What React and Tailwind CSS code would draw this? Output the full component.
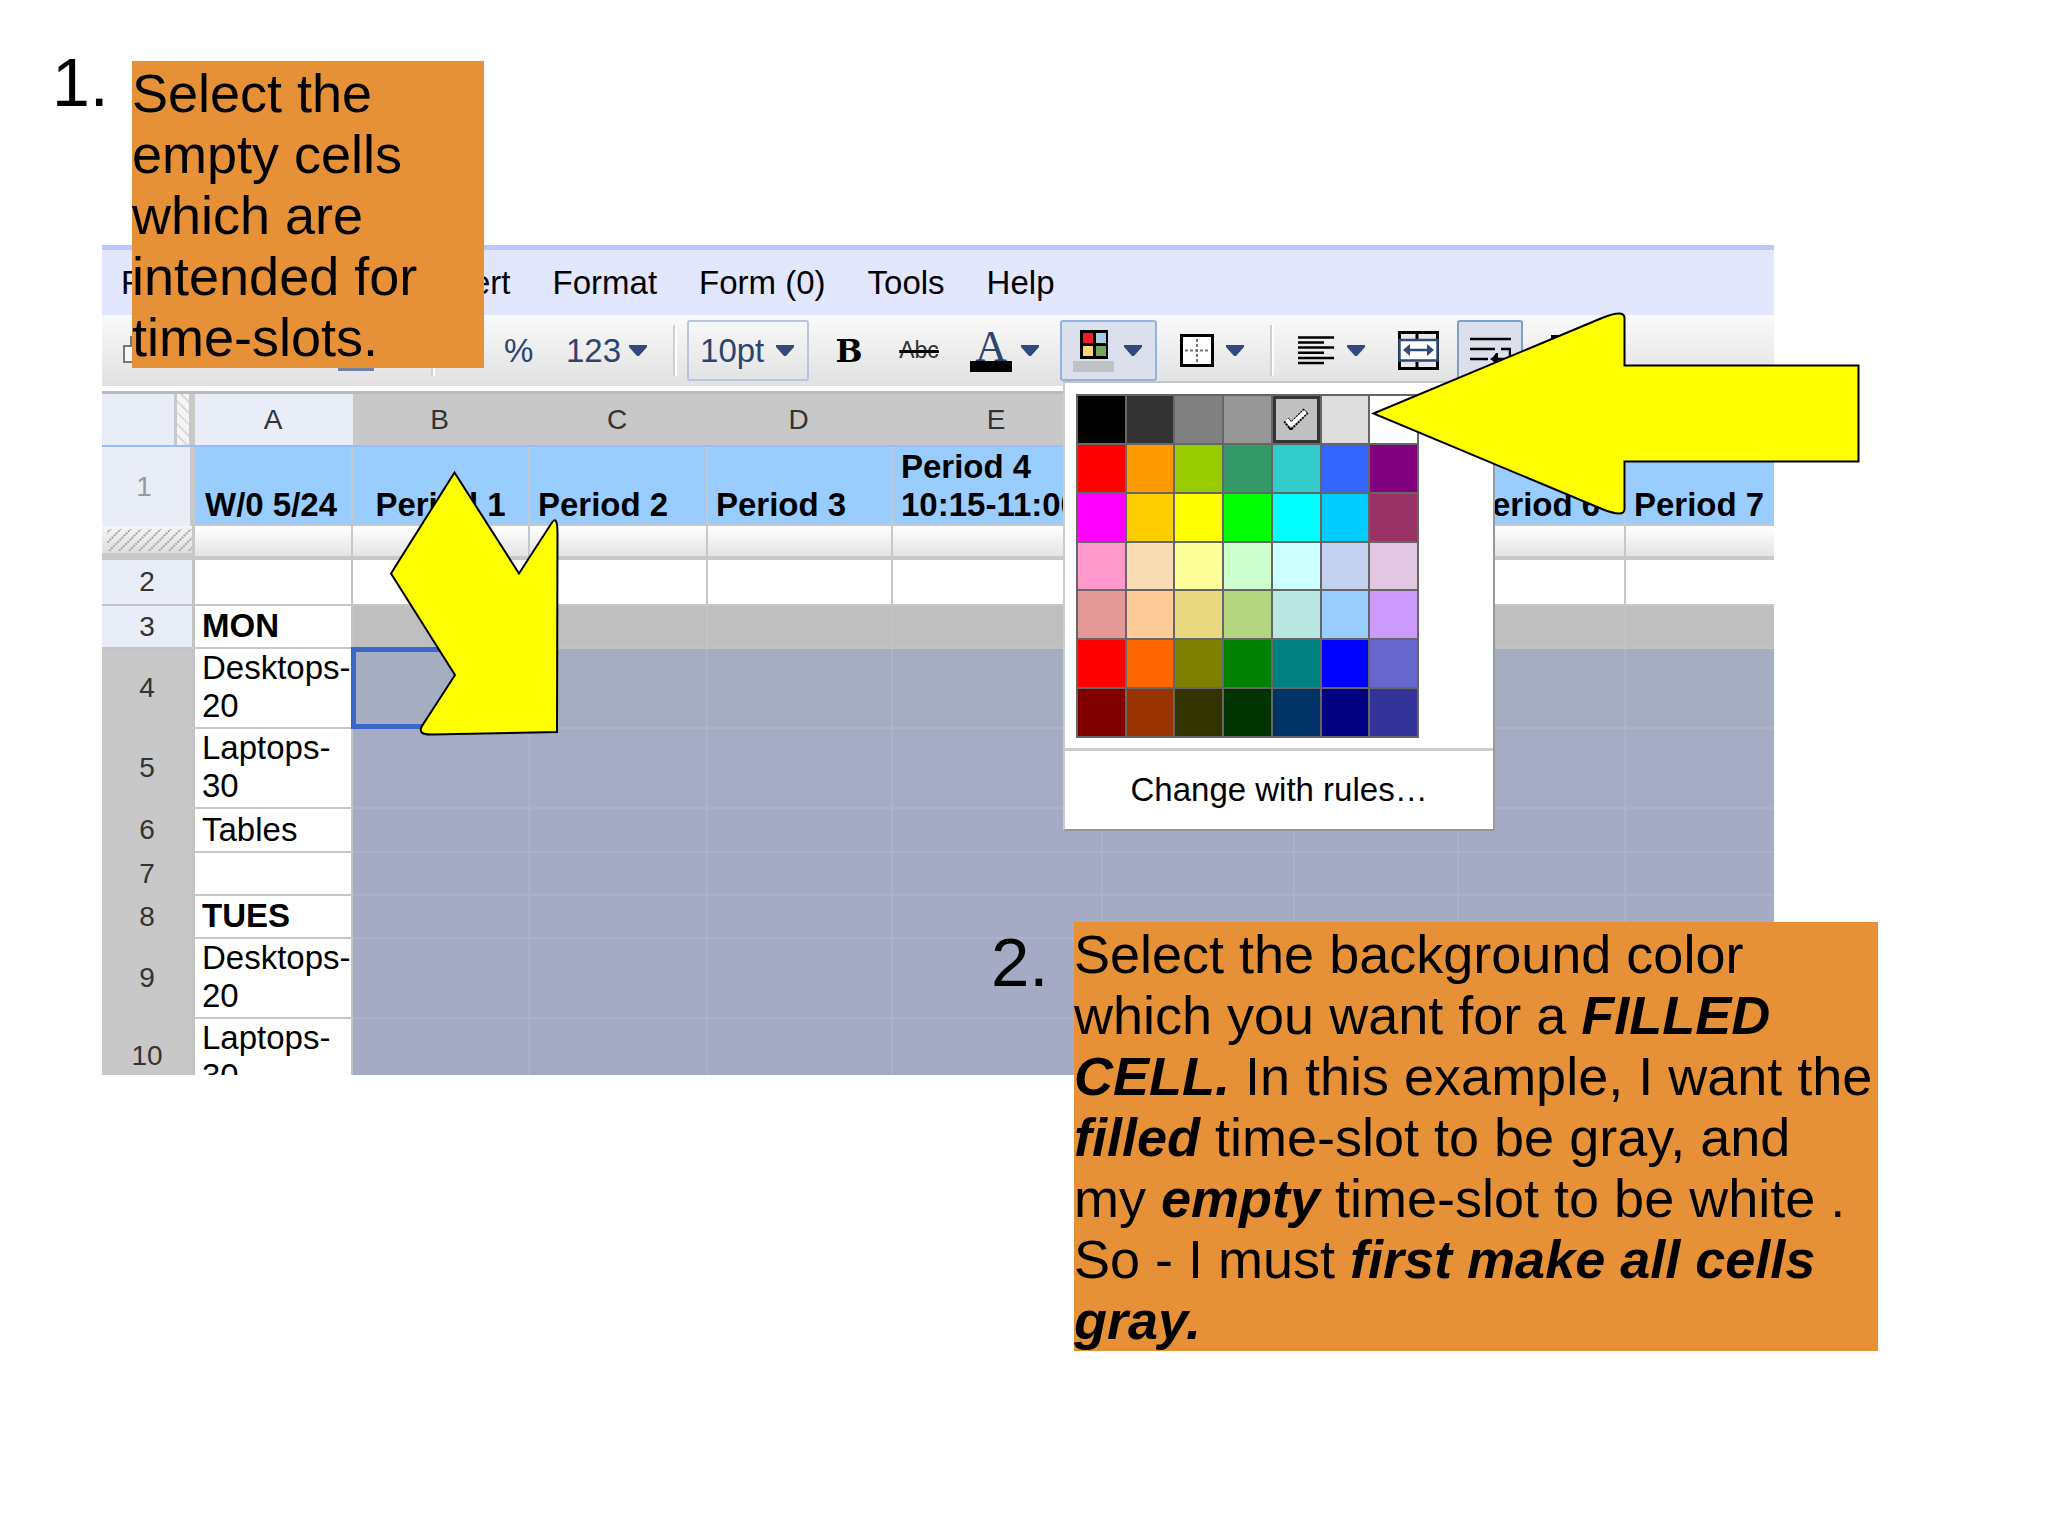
import { useState } from 'react';

const menus = ['File', 'Edit', 'View', 'Insert', 'Format', 'Form (0)', 'Tools', 'Help'];

const palette = [
    '#000000', '#333333', '#808080', '#969696', '#c0c0c0', '#dddddd', '#ffffff',
    '#ff0000', '#ff9900', '#99cc00', '#339966', '#33cccc', '#3366ff', '#800080',
    '#ff00ff', '#ffcc00', '#ffff00', '#00ff00', '#00ffff', '#00ccff', '#993366',
    '#ff99cc', '#f9dcb4', '#ffff99', '#ccffcc', '#ccffff', '#c2d1f0', '#e1c7e1',
    '#e49898', '#ffcc99', '#ead880', '#b3d580', '#bbe7e2', '#99ccff', '#cc99ff',
    '#ff0000', '#ff6600', '#808000', '#008000', '#008080', '#0000ff', '#6666cc',
    '#800000', '#993300', '#333300', '#003300', '#003366', '#000080', '#333399',
];

const letters = ['B', 'C', 'D', 'E', 'F', 'G', 'H', 'I'];

const periods = [
    ['B', 'Period 1', 'text-center'],
    ['C', 'Period 2', 'pl-[8px]'],
    ['D', 'Period 3', 'pl-[8px]'],
    ['E', 'Period 4', 'pl-[8px]', '10:15-11:00'],
    ['F', '', 'pl-[8px]'],
    ['G', '', 'pl-[8px]'],
    ['H', 'Period 6', 'pl-[11px]'],
    ['I', 'Period 7', 'pl-[8px]'],
];

const rows = [
    { n: 2, height: 'h-[46px]', lines: [], fill: 'bg-white border-[#c8c8c8]' },
    { n: 3, height: 'h-[43px]', lines: ['MON'], bold: true, fill: 'bg-[#c0bfc0] border-[#c3c3c5]' },
    { n: 4, height: 'h-[80px]', lines: ['Desktops-', '20'], fill: 'bg-[#a5adc0] border-[#abb4cb]', selected: true },
    { n: 5, height: 'h-[80px]', lines: ['Laptops-', '30'], fill: 'bg-[#a6acc3] border-[#abb3cc]', selected: true },
    { n: 6, height: 'h-[44px]', lines: ['Tables'], fill: 'bg-[#a6abc5] border-[#abb3cc]', selected: true },
    { n: 7, height: 'h-[43px]', lines: [], fill: 'bg-[#a6abc5] border-[#abb3cc]', selected: true },
    { n: 8, height: 'h-[43px]', lines: ['TUES'], bold: true, fill: 'bg-[#a6abc5] border-[#abb3cc]', selected: true },
    { n: 9, height: 'h-[80px]', lines: ['Desktops-', '20'], fill: 'bg-[#a6abc5] border-[#abb3cc]', selected: true },
    { n: 10, height: 'h-[56px]', lines: ['Laptops-', '30'], fill: 'bg-[#a6abc5] border-[#abb3cc]', selected: true, last: true },
];

const Caret = () => (
    <svg width="18" height="11" viewBox="0 0 18 11" className="shrink-0" fill="#2f4a7c">
        <path d="M0 0h18v2l-8 9H8L0 2z" />
    </svg>
);

const Divider = ({ className }) => (
    <div className={`h-[51px] w-1 shrink-0 border-l-2 border-r-2 border-l-[#cfcfd2] border-r-white ${className}`} />
);

const FillIcon = () => (
    <svg width="41" height="43" viewBox="0 0 41 43">
        <path d="M7 1h28v29H7z" fill="#000" />
        <path d="M10 4h10v10H10z" fill="#ee1c25" />
        <path d="M23 4h10v10H23z" fill="#a8cbe8" />
        <path d="M10 17h10v10H10z" fill="#ffd670" />
        <path d="M23 17h10v10H23z" fill="#72a858" />
        <path d="M0 32h41v11H0z" fill="#bfc3c6" />
    </svg>
);

const BordersIcon = () => (
    <svg width="34" height="33" viewBox="0 0 34 33" fill="none">
        <path d="M1.5 1.5h31v30h-31z" fill="#fff" stroke="#000" strokeWidth="3" />
        <path d="M17 5v24M5 16.500h24" stroke="#777" strokeWidth="2" strokeDasharray="3 2" />
    </svg>
);

const AlignIcon = () => (
    <svg width="36" height="29" viewBox="0 0 36 29" stroke="#000" strokeWidth="2.500">
        <path d="M0 1.500h36M0 6.500h26M0 11.500h36M0 16.700h26M0 21.900h36M0 27h26" />
    </svg>
);

const MergeIcon = () => (
    <svg width="41" height="39" viewBox="0 0 41 39" fill="none">
        <path d="M1.500 1.500h38v36h-38z" fill="#e9e9eb" stroke="#000" strokeWidth="3" />
        <path d="M19 1v7M19 31v7" stroke="#000" strokeWidth="3" />
        <path d="M1.500 9h38v20.500h-38z" fill="#fff" stroke="#2f4a7c" strokeWidth="2.500" />
        <path d="M9 19h23" stroke="#2f4a7c" strokeWidth="2.500" />
        <path d="M5 19l7-6v12zM36 19l-7-6v12z" fill="#2f4a7c" />
    </svg>
);

const WrapIcon = () => (
    <svg width="41" height="29" viewBox="0 0 41 29" fill="none" stroke="#000" strokeWidth="2.500">
        <path d="M0 3h41M0 13h25M31 13h9v10H22M0 23h18" />
        <path d="M20 23l3-2 3-4h2v12h-2l-3-4z" fill="#000" stroke="none" />
    </svg>
);

const CheckIcon = () => (
    <svg width="26" height="22" viewBox="0 0 26 22" fill="none">
        <path d="M3 12l5 6L23 3" stroke="#000" strokeWidth="7" strokeDasharray="2 1" />
        <path d="M3.500 11.500L8 17 22.500 3.500" stroke="#fff" strokeWidth="4" />
    </svg>
);

const FreezeHandle = () => (
    <svg width="100%" height="27" className="block bg-linear-to-b from-[#f6f6f6] to-[#dedede]">
        <defs>
            <pattern id="hatch" x="5" y="3" width="10" height="24" patternUnits="userSpaceOnUse">
                <path d="M-18 22L4 0M-8 22L14 0M2 22L24 0" stroke="#a4a4a4" strokeWidth="2" strokeDasharray="2 1" />
            </pattern>
        </defs>
        <rect x="5" y="3" width="100%" height="22" fill="url(#hatch)" />
    </svg>
);

const ColorMenu = ({ color, onPick }) => (
    <div className="absolute left-[3px] top-[61px] z-10 w-[432px] border-2 border-b-[#94949a] border-l-[#cccccc] border-r-[#999a9e] border-t-[#c4c4c6] bg-white">
        <div className="px-[11px] pb-[10px] pt-[11px]">
            <div className="grid h-[344px] w-[343px] grid-cols-7 grid-rows-7 gap-[2px] bg-[#666] p-[2px]">
                {palette.map((c, index) => (
                    <button
                        key={index}
                        aria-label={c}
                        onClick={() => onPick(index)}
                        style={{ backgroundColor: c }}
                        className={`flex items-center justify-center ${index === color ? 'border-[3px] border-[#333338]' : ''}`}
                    >
                        {index === color && <CheckIcon />}
                    </button>
                ))}
            </div>
        </div>
        <button className="block h-[81px] w-full border-t-[3px] border-[#cccccc] text-center text-black">
            Change with rules…
        </button>
    </div>
);

const Toolbar = () => {
    const [color, setColor] = useState(4);

    return (
        <div className="flex h-[71px] items-center bg-linear-to-b from-[#fafafa] to-[#e1e1e3] text-[#2c4470]">
            <div className="flex h-full w-[402px] shrink-0 items-center pl-[21px]">
                <button aria-label="Print">
                    <svg width="36" height="30" viewBox="0 0 36 30" fill="#f6f6f6" stroke="#777" strokeWidth="2">
                        <path d="M1 10h34v16H1zM8 1h20v9H8z" />
                    </svg>
                </button>
                <div className="mb-[15px] ml-[179px] h-[3px] w-9 self-end bg-[#71819f]" />
                <Divider className="ml-[57px]" />
            </div>
            <button className="w-[29px] shrink-0">%</button>
            <button className="ml-[33px] flex shrink-0 items-center gap-2">
                123
                <Caret />
            </button>
            <Divider className="ml-[26px]" />
            <label className="relative ml-[10px] flex shrink-0 items-center">
                <select
                    aria-label="Font size"
                    className="h-[61px] w-[122px] appearance-none rounded-[3px] border-2 border-[#b9c4e0] pl-[11px]"
                >
                    <option>10pt</option>
                </select>
                <span className="pointer-events-none absolute right-[15px]"><Caret /></span>
            </label>
            <button className="ml-[26px] w-7 shrink-0 font-['DejaVu_Serif',serif] text-[32px] font-bold text-black">B</button>
            <button className="ml-[35px] w-[42px] shrink-0 text-[23px] text-[#333] line-through decoration-black decoration-[3px]">Abc</button>
            <button aria-label="Text color" className="ml-[30px] flex shrink-0 items-center gap-[9px]">
                <span className="flex w-[42px] flex-col items-center border-b-[11px] border-black pt-1 font-['Liberation_Serif',serif] text-[44px] leading-7">A</span>
                <Caret />
            </button>
            <div className="relative ml-[21px] shrink-0">
                <button aria-label="Background color" className="flex h-[61px] w-[97px] items-center gap-[10px] rounded-[3px] border-2 border-[#93b2dc] bg-[#dce0ec] pl-[11px]">
                    <FillIcon />
                    <Caret />
                </button>
                <ColorMenu color={color} onPick={setColor} />
            </div>
            <button aria-label="Borders" className="ml-[23px] flex shrink-0 items-center gap-3">
                <BordersIcon />
                <Caret />
            </button>
            <Divider className="ml-[26px]" />
            <button aria-label="Align" className="ml-6 flex shrink-0 items-center gap-[13px]">
                <AlignIcon />
                <Caret />
            </button>
            <button aria-label="Merge across" className="ml-[33px] shrink-0"><MergeIcon /></button>
            <button aria-label="Wrap text" className="ml-[18px] flex h-[61px] w-[66px] shrink-0 items-center justify-center rounded-[3px] border-2 border-[#7ba0cf] bg-[#dce0ec]">
                <WrapIcon />
            </button>
            <button aria-label="Insert chart" className="ml-7 shrink-0">
                <svg width="34" height="32" viewBox="0 0 34 32" fill="none" stroke="#000" strokeWidth="3">
                    <path d="M1.500 1.500h31v29h-31z" />
                </svg>
            </button>
        </div>
    );
};

const Sheet = () => (
    <table className="w-full table-fixed border-separate border-spacing-0 text-left">
        <colgroup>
            <col className="w-[93px]" />
            <col className="w-[158px]" />
            <col className="w-[177px]" />
            <col className="w-[178px]" />
            <col className="w-[185px]" />
            <col className="w-[210px]" />
            <col className="w-[192px]" />
            <col className="w-[164px]" />
            <col className="w-[167px]" />
            <col />
        </colgroup>
        <thead>
            <tr className="text-[28px] text-[#333]">
                <td className="h-14 border-b-2 border-t-[3px] border-b-[#99bbff] border-t-[#b9babd] bg-[#c8c8c8] p-0">
                    <div className="flex h-[51px] bg-[#e8edf7]">
                        <div className="w-[75px] border-r-[3px] border-[#c8c8c8]" />
                        <div className="w-[12px] bg-[repeating-linear-gradient(45deg,#f4f4f4_0px,#f4f4f4_6px,#dadada_6px,#dadada_8px)]" />
                        <div className="grow bg-[#c8c8c8]" />
                    </div>
                </td>
                <th className="border-b-2 border-t-[3px] border-b-[#99bbff] border-t-[#b9babd] bg-[#e8edf7] p-0 pr-[2px] text-center font-normal">A</th>
                {letters.map((letter) => (
                    <th key={letter} className="border-b-2 border-t-[3px] border-b-[#99bbff] border-t-[#b9babd] bg-[#c8c8c9] p-0 pr-[4px] text-center font-normal">{letter}</th>
                ))}
            </tr>
            <tr className="align-bottom leading-[38px] font-bold text-black">
                <th className="h-[79px] border-r-[5px] border-[#c8c8c8] bg-[#e8edf7] p-0 pr-[4px] text-center align-middle text-[28px] font-normal text-[#999]">1</th>
                <th className="border-b-2 border-r-2 border-[#c4c8cc] bg-[#99ccff] p-0 pl-[10px] whitespace-nowrap">W/0 5/24</th>
                {periods.map(([col, name, align, time]) => (
                    <th key={col} className={`border-b-2 border-r-2 border-[#c4c8cc] bg-[#99ccff] p-0 whitespace-nowrap last:border-r-0 ${align}`}>
                        {name}
                        {time && <><br />{time}</>}
                    </th>
                ))}
            </tr>
            <tr>
                <td className="h-[34px] border-b-[7px] border-r-[3px] border-[#c8c8c8] p-0">
                    <FreezeHandle />
                </td>
                {['A', ...letters].map((letter) => (
                    <td key={letter} className="border-b-4 border-r-2 border-[#c8c8c8] bg-linear-to-b from-white to-[#e4e4e6] p-0 last:border-r-0" />
                ))}
            </tr>
        </thead>
        <tbody>
            {rows.map((row) => (
                <tr key={row.n}>
                    <th className={`${row.height} border-r-[3px] p-0 text-center text-[28px] leading-[34px] font-normal text-[#333] ${row.selected ? 'border-[#c4c4c5] bg-[#c8c8c9] pb-[2px]' : 'border-b-2 border-[#c4c4c5] bg-[#e8edf7]'} ${row.last ? 'align-bottom' : ''}`}>
                        {row.n}
                    </th>
                    <td className={`border-r-2 border-r-[#c4c4c8] bg-white p-0 pl-[7px] leading-[38px] text-black ${row.bold ? 'font-bold' : ''} ${row.last ? 'align-top' : 'border-b-2 border-b-[#c8c8c8] pb-[2px] align-bottom'}`}>
                        <div className={row.last ? 'h-14 overflow-hidden' : ''}>
                            {row.lines.map((line) => <div key={line}>{line}</div>)}
                        </div>
                    </td>
                    {letters.map((letter) => (
                        <td key={letter} className={`relative border-r-2 p-0 last:border-r-0 ${row.fill} ${row.last ? '' : 'border-b-2'}`}>
                            {letter === 'B' && row.n === 4 && (
                                <div className="absolute -inset-[2px] border-[5px] border-[#3966c8]" />
                            )}
                        </td>
                    ))}
                </tr>
            ))}
        </tbody>
    </table>
);

const App = () => {
    return (
        <main className="relative min-h-screen bg-white pb-20 pl-[102px] pr-[274px] pt-[245px] font-['Liberation_Sans',Arial,sans-serif] text-[33px] text-black">
            <section>
                <nav className="flex h-[70px] items-center gap-[42px] border-t-[5px] border-[#b8c8fc] bg-[#e3e7fe] pl-[19px]">
                    {menus.map((menu) => (
                        <button key={menu} className="shrink-0 whitespace-nowrap">{menu}</button>
                    ))}
                </nav>
                <Toolbar />
                <div className="h-[5px] bg-white" />
                <Sheet />
            </section>

            {/* step 1 */}
            <span className="absolute left-[52px] top-[43px] text-[68px] leading-[79px]">1.</span>
            <p className="absolute left-[132px] top-[61px] w-[352px] bg-[#e69138] pt-[2px] text-[54px] leading-[61px]">
                Select the<br />
                empty cells<br />
                which are<br />
                intended for<br />
                time-slots.
            </p>
            <svg className="absolute left-[389px] top-[470px]" width="171" height="267" viewBox="389 470 171 267">
                <path
                    d="M454.500 472.500L519 573.500L551 524Q557.500 513 557.500 534L557 732L432 734.500Q417 735 422 726L455 675L391 573.500Z"
                    fill="#ff0"
                    stroke="#000"
                    strokeWidth="2"
                />
            </svg>

            {/* step 2 */}
            <span className="absolute left-[991px] top-[923px] text-[69px] leading-[79px]">2.</span>
            <p className="absolute left-[1074px] top-[922px] w-[804px] bg-[#e69138] pt-[2px] text-[54px] leading-[61px] whitespace-nowrap">
                Select the background color<br />
                which you want for a <b><i>FILLED</i></b><br />
                <b><i>CELL.</i></b> In this example, I want the<br />
                <b><i>filled</i></b> time-slot to be gray, and<br />
                my <b><i>empty</i></b> time-slot to be white .<br />
                So - I must <b><i>first make all cells</i></b><br />
                <b><i>gray.</i></b>
            </p>
            <svg className="absolute left-[1371px] top-[310px] z-20" width="490" height="207" viewBox="1371 310 490 207">
                <path
                    d="M1373.500 413.500L1602 318Q1624.500 309 1624.500 318V365.500H1858.500V461.500H1624.500V509Q1624.500 518 1602 509Z"
                    fill="#ff0"
                    stroke="#000"
                    strokeWidth="2"
                />
            </svg>
        </main>
    );
};

export default App;
